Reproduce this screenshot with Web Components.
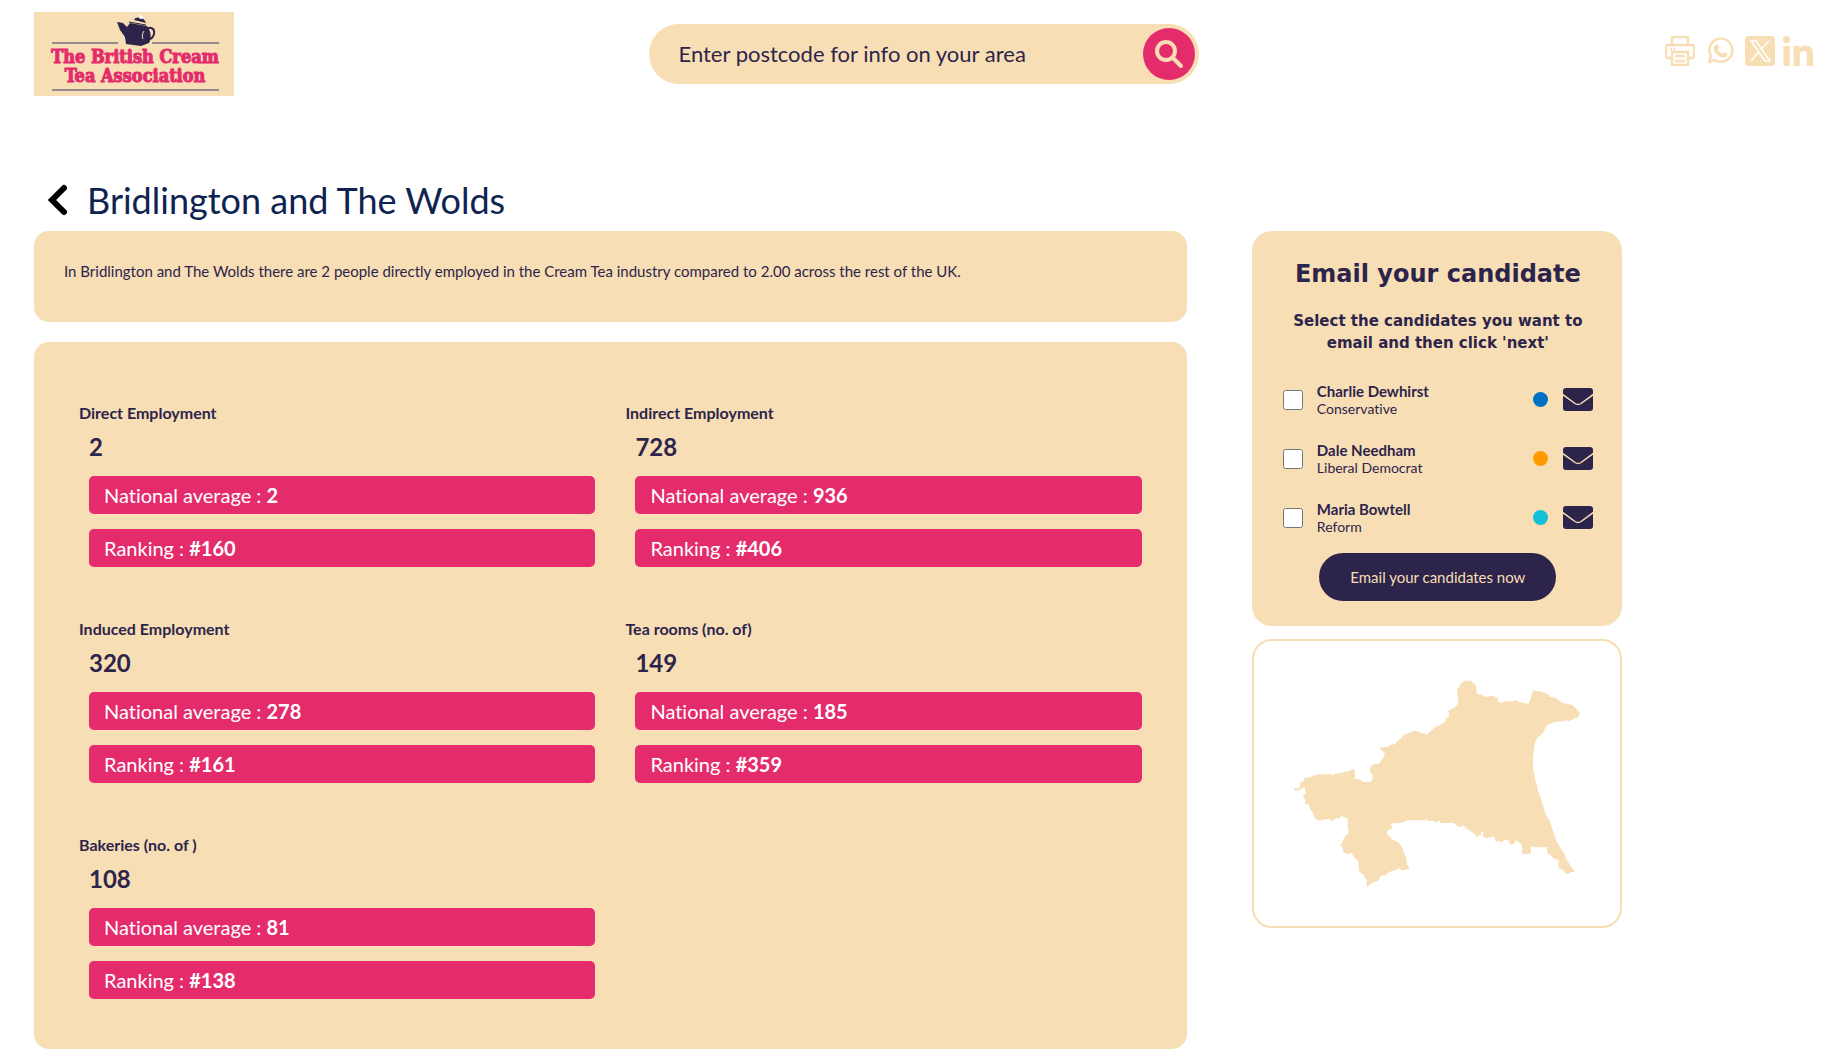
<!DOCTYPE html>
<html lang="en">
<head>
<meta charset="utf-8">
<meta name="viewport" content="width=device-width, initial-scale=1">
<title>Bridlington and The Wolds</title>
<style>
    :root {
        --cream: #f7deb5;
        --pink: #e42c6d;
        --navy: #2d244b;
    }
    body {
        margin: 0;
        background: #fff;
        color: var(--navy);
        font-family: Lato, "Liberation Sans", sans-serif;
        font-size: 16px;
        font-variant-ligatures: none;
    }
    .columns {
        display: grid;
        grid-template-columns: minmax(0, 1fr) 370px;
        column-gap: 65px;
        align-items: start;
        margin: 9px 12% 13px 34px;
    }
    .main {
        display: grid;
        gap: 20px;
    }
    .side {
        display: grid;
        gap: 13px;
    }
</style>
</head>
<body>
<site-header></site-header>
<page-title>Bridlington and The Wolds</page-title>
<div class="columns">
    <main class="main">
        <summary-panel>In Bridlington and The Wolds there are 2 people directly employed in the Cream Tea industry compared to 2.00 across the rest of the UK.</summary-panel>
        <stats-panel>
            <stat-item label="Direct Employment" value="2" average="2" ranking="#160"></stat-item>
            <stat-item label="Indirect Employment" value="728" average="936" ranking="#406"></stat-item>
            <stat-item label="Induced Employment" value="320" average="278" ranking="#161"></stat-item>
            <stat-item label="Tea rooms (no. of)" value="149" average="185" ranking="#359"></stat-item>
            <stat-item label="Bakeries (no. of )" value="108" average="81" ranking="#138"></stat-item>
        </stats-panel>
    </main>
    <aside class="side">
        <email-panel>
            <candidate-row name="Charlie Dewhirst" party="Conservative" color="#0070c5"></candidate-row>
            <candidate-row name="Dale Needham" party="Liberal Democrat" color="#ff9a00"></candidate-row>
            <candidate-row name="Maria Bowtell" party="Reform" color="#12bfdb"></candidate-row>
        </email-panel>
        <area-map></area-map>
    </aside>
</div>

<script>
class SiteLogo extends HTMLElement {
    constructor() {
        super();
        this.attachShadow({ mode: 'open' });
    }

    connectedCallback() {
        this.shadowRoot.innerHTML = `
            <style>
                :host { display: block; background: var(--cream); }
                svg { display: block; }
                text {
                    font-family: "DejaVu Serif Condensed", "DejaVu Serif", serif;
                    font-weight: bold;
                    font-size: 18px;
                    fill: var(--pink);
                    stroke: var(--pink);
                    text-anchor: middle;
                }
            </style>
            <svg width="200" height="84" viewBox="0 0 200 84" role="img" aria-label="The British Cream Tea Association">
                <path d="M18 31h66M118 31h67M18 78h167" stroke="#77707f" stroke-width="1.500"/>
                <path d="M83 10l6 1 4 4 3-4 17 3c4 5 5 12 2 17l-8 3-15-2-1-7-5-7z" fill="#2d244b"/>
                <path d="M95 10l17 3" stroke="#2d244b" stroke-width="1"/>
                <path d="M100 8c2-4 10-3 12 3z" fill="#2d244b"/>
                <circle cx="107" cy="5" r="2" fill="#fff"/>
                <path d="M112 18c4-4 9-2 8 4-1 5-5 6-9 6" fill="none" stroke="#2d244b" stroke-width="2"/>
                <path d="M110 19c-2 3-2 5-1 8" fill="none" stroke="#f7deb5" stroke-width="1"/>
                <text x="101" y="51">The British Cream</text>
                <text x="101" y="70">Tea Association</text>
            </svg>
        `;
    }
}

class PostcodeSearch extends HTMLElement {
    constructor() {
        super();
        this.attachShadow({ mode: 'open' });
    }

    connectedCallback() {
        this.shadowRoot.innerHTML = `
            <style>
                :host { display: block; }
                form {
                    display: flex;
                    align-items: center;
                    height: 60px;
                    box-sizing: border-box;
                    padding: 0 4px 0 30px;
                    border-radius: 30px;
                    background: var(--cream);
                }
                input {
                    flex: 1;
                    min-width: 0;
                    border: 0;
                    padding: 0;
                    outline: 0;
                    background: none;
                    color: var(--navy);
                    font: 22px/30px Lato, sans-serif;
                }
                input::placeholder { color: var(--navy); opacity: 1; }
                button {
                    width: 52px;
                    height: 52px;
                    border: 0;
                    padding: 0;
                    border-radius: 50%;
                    background: var(--pink);
                    display: grid;
                    place-items: center;
                }
            </style>
            <form>
                <input type="text" placeholder="Enter postcode for info on your area" aria-label="Postcode">
                <button type="button" aria-label="Search">
                    <svg width="30" height="30" viewBox="0 0 30 30" fill="none" stroke="#f7deb5" stroke-width="4" stroke-linecap="round">
                        <circle cx="12" cy="12" r="9"/>
                        <path d="M19 19l8 8"/>
                    </svg>
                </button>
            </form>
        `;
    }
}

class ShareLinks extends HTMLElement {
    constructor() {
        super();
        this.attachShadow({ mode: 'open' });
    }

    connectedCallback() {
        this.shadowRoot.innerHTML = `
            <style>
                :host { display: flex; gap: 8px; align-items: center; color: var(--cream); }
                a { display: block; color: inherit; }
                svg { display: block; }
            </style>
            <a href="#" aria-label="Print">
                <svg width="30" height="30" viewBox="0 0 30 30" fill="none" stroke="currentColor" stroke-width="2.400">
                    <path d="M7 8V1h16v7M7 22H3a2 2 0 0 1-2-2v-9a2 2 0 0 1 2-2h24a2 2 0 0 1 2 2v9a2 2 0 0 1-2 2h-4"/>
                    <path d="M7 16h16v13H7zM10 20h10M10 25h10M5 13h2M8 13h2"/>
                </svg>
            </a>
            <a href="#" aria-label="WhatsApp">
                <svg width="34" height="30" viewBox="-4 -2 34 30">
                    <path d="M2 24l2-6a11.500 11.500 0 1 1 4 4z" fill="none" stroke="currentColor" stroke-width="2.400" stroke-linejoin="round"/>
                    <path d="M8.500 7c1-1 2-.8 2.400 0l1.100 2.500c.2.600-1 1.500-1.300 2 1.300 2.300 2.700 3.500 5 4.400.5-.5 1.200-1.900 1.900-1.600l2.500 1.200c.7.400.2 2-.3 2.700-1.500 1.600-3.700 1.500-5.800.7-3.300-1.300-5.300-3.300-6.800-6-1-2-.7-4.400 1.300-5.900z" fill="currentColor"/>
                </svg>
            </a>
            <a href="#" aria-label="X">
                <svg width="30" height="30" viewBox="0 0 30 30">
                    <rect width="30" height="30" rx="4" fill="currentColor"/>
                    <path d="M6 5h5l14 20h-5zM24 5L16 13.500M6 25l8-9" fill="none" stroke="#fff" stroke-width="1.600"/>
                </svg>
            </a>
            <a href="#" aria-label="LinkedIn">
                <svg width="30" height="30" viewBox="0 0 30 30" fill="currentColor">
                    <circle cx="3.600" cy="3.600" r="3.600"/>
                    <path d="M.5 10h6.200v20H.5zM10.600 10h5.900v2.700c1-1.900 3.200-3.200 6-3.200 6 0 7.500 3.800 7.500 9V30h-6.200v-9.700c0-2.500-.1-5.200-3.200-5.200s-3.800 2.500-3.800 5V30h-6.200z"/>
                </svg>
            </a>
        `;
    }
}

class SiteHeader extends HTMLElement {
    constructor() {
        super();
        this.attachShadow({ mode: 'open' });
    }

    connectedCallback() {
        this.shadowRoot.innerHTML = `
            <style>
                :host { display: block; }
                header {
                    display: grid;
                    grid-template-columns: 1fr 550px 1fr;
                    align-items: start;
                    padding: 12px 30px 0 34px;
                }
                site-logo { justify-self: start; }
                postcode-search { margin-top: 12px; }
                share-links { justify-self: end; margin-top: 24px; }
            </style>
            <header>
                <site-logo></site-logo>
                <postcode-search></postcode-search>
                <share-links></share-links>
            </header>
        `;
    }
}

class PageTitle extends HTMLElement {
    constructor() {
        super();
        this.attachShadow({ mode: 'open' });
    }

    connectedCallback() {
        this.shadowRoot.innerHTML = `
            <style>
                :host { display: flex; align-items: center; gap: 20px; padding: 82px 34px 0 47px; }
                a { display: block; color: #000; }
                svg { display: block; }
                h1 { margin: 0; font-size: 36px; line-height: 44px; font-weight: 400; color: #0f2350; }
            </style>
            <a href="#" aria-label="Back">
                <svg width="20" height="32" viewBox="0 0 20 32" fill="none" stroke="currentColor" stroke-width="6" stroke-linecap="round">
                    <path d="M17 4L5 16l12 12"/>
                </svg>
            </a>
            <h1><slot></slot></h1>
        `;
    }
}

class SummaryPanel extends HTMLElement {
    constructor() {
        super();
        this.attachShadow({ mode: 'open' });
    }

    connectedCallback() {
        this.shadowRoot.innerHTML = `
            <style>
                :host { display: block; padding: 30px 30px 40px; border-radius: 15px; background: var(--cream); }
                p { margin: 0; font-size: 15px; line-height: 21px; }
            </style>
            <p><slot></slot></p>
        `;
    }
}

class StatsPanel extends HTMLElement {
    constructor() {
        super();
        this.attachShadow({ mode: 'open' });
    }

    connectedCallback() {
        this.shadowRoot.innerHTML = `
            <style>
                :host {
                    display: grid;
                    grid-template-columns: 1fr 1fr;
                    gap: 51px 30px;
                    padding: 60px 45px 50px;
                    border-radius: 15px;
                    background: var(--cream);
                }
            </style>
            <slot></slot>
        `;
    }
}

class StatItem extends HTMLElement {
    constructor() {
        super();
        this.attachShadow({ mode: 'open' });
    }

    connectedCallback() {
        this.shadowRoot.innerHTML = `
            <style>
                :host { display: block; }
                h3 { margin: 0; font-size: 16px; line-height: 22px; font-weight: bold; }
                .body { display: grid; gap: 15px; margin-left: 10px; }
                .value { font-size: 24px; line-height: 36px; font-weight: bold; margin-top: 5px; margin-bottom: -4px; }
                .bar {
                    padding: 0 15px;
                    border-radius: 5px;
                    background: var(--pink);
                    color: #fff;
                    font-size: 20px;
                    line-height: 38px;
                }
            </style>
            <h3>${this.getAttribute('label')}</h3>
            <div class="body">
                <div class="value">${this.getAttribute('value')}</div>
                <div class="bar">National average : <b>${this.getAttribute('average')}</b></div>
                <div class="bar">Ranking : <b>${this.getAttribute('ranking')}</b></div>
            </div>
        `;
    }
}

class EmailPanel extends HTMLElement {
    constructor() {
        super();
        this.attachShadow({ mode: 'open' });
    }

    connectedCallback() {
        this.shadowRoot.innerHTML = `
            <style>
                :host { display: block; padding: 25px 29px 25px 31px; border-radius: 20px; background: var(--cream); text-align: center; }
                h2, h4 { margin: 0; font-family: "DejaVu Sans", sans-serif; font-weight: bold; }
                h2 { font-size: 24px; line-height: 36px; }
                h4 { font-size: 15px; line-height: 22px; padding: 18px 0 26px; }
                .list { display: grid; gap: 20px; text-align: left; }
                button {
                    height: 48px;
                    margin-top: 16px;
                    padding: 0 31px;
                    border: 0;
                    border-radius: 24px;
                    background: var(--navy);
                    color: var(--cream);
                    font: 15px/20px Lato, sans-serif;
                }
            </style>
            <h2>Email your candidate</h2>
            <h4>Select the candidates you want to email and then click 'next'</h4>
            <div class="list"><slot></slot></div>
            <button type="button">Email your candidates now</button>
        `;
    }
}

class CandidateRow extends HTMLElement {
    constructor() {
        super();
        this.attachShadow({ mode: 'open' });
    }

    connectedCallback() {
        const name = this.getAttribute('name');
        this.shadowRoot.innerHTML = `
            <style>
                :host { display: flex; align-items: center; height: 39px; }
                input { width: 20px; height: 20px; margin: 0 14px 0 0; }
                label { flex: 1; line-height: 18px; }
                b, span { display: block; }
                b { font-size: 15px; }
                span { font-size: 14px; }
                i { width: 15px; height: 15px; border-radius: 50%; background: ${this.getAttribute('color')}; }
                a { display: block; margin-left: 15px; color: var(--navy); }
                svg { display: block; }
            </style>
            <input type="checkbox" id="pick">
            <label for="pick"><b>${name}</b><span>${this.getAttribute('party')}</span></label>
            <i></i>
            <a href="#" aria-label="Email ${name}">
                <svg width="30" height="23" viewBox="0 0 30 23">
                    <rect width="30" height="23" rx="3" fill="currentColor"/>
                    <path d="M-1 6L12 15.500q3 2 6 0L31 6" fill="none" stroke="#f7deb5" stroke-width="1.500"/>
                </svg>
            </a>
        `;
    }
}

class AreaMap extends HTMLElement {
    constructor() {
        super();
        this.attachShadow({ mode: 'open' });
    }

    connectedCallback() {
        this.shadowRoot.innerHTML = `
            <style>
                :host { display: block; padding: 39px 40px; border: 2px solid var(--cream); border-radius: 20px; }
                svg { display: block; width: 100%; color: var(--cream); }
            </style>
            <svg viewBox="162 155 858 620" fill="currentColor" role="img" aria-label="Map of Bridlington and The Wolds">
                <path d="M162 480L175 480 180 475 180 462 190 459 195 448 212 447 218 443 234 438 268 438 272 435 276 441 284 436 306 434 313 430 327 429 339 421 344 427 345 452 358 453 365 457 368 461 390 461 396 457 399 440 390 432 390 419 400 408 418 406 424 395 430 389 435 375 418 361 425 357 441 356 451 349 465 348 474 336 483 330 489 321 517 310 522 306 536 310 547 316 555 313 557 321 566 315 579 303 586 295 597 292 617 279 617 273 628 262 624 247 640 240 655 226 651 181 658 175 661 166 669 161 676 156 681 160 692 156 697 163 704 165 709 175 710 196 725 199 740 207 752 202 764 202 765 209 773 208 775 220 783 224 796 219 820 219 826 215 835 220 852 223 859 227 868 222 880 184 888 188 902 189 925 198 928 206 943 207 955 215 967 224 998 230 1009 241 1020 254 1015 265 1003 271 984 279 976 276 971 279 945 280 923 289 915 300 908 316 892 328 884 345 883 360 879 385 879 426 883 433 884 450 891 472 894 487 902 509 916 555 930 580 948 635 961 660 973 675 976 687 990 710 1005 730 991 732 987 736 977 736 970 725 956 720 956 695 940 690 937 685 923 674 920 656 882 657 876 653 873 656 873 674 869 677 847 677 846 651 843 646 828 635 822 647 813 649 808 645 805 635 791 636 786 644 780 639 766 639 764 626 751 626 741 630 728 624 729 609 722 614 724 620 716 621 710 626 703 616 683 602 671 601 682 597 668 593 657 597 641 584 601 584 600 577 592 579 590 585 581 577 568 578 565 580 561 573 553 576 503 576 483 584 454 585 453 590 458 600 441 608 441 617 459 635 476 642 487 659 494 681 499 687 500 708 509 720 504 723 485 726 475 718 471 724 447 731 439 740 422 743 415 757 398 763 379 777 381 755 375 750 371 739 358 730 354 698 343 687 334 673 324 677 310 671 307 656 299 652 305 646 312 628 327 611 323 600 323 571 304 563 299 571 289 569 276 579 268 572 262 573 259 571 248 575 236 577 224 568 218 552 211 545 206 526 199 529 195 523 197 514 189 507 191 501 197 497 194 475 183 482 178 486 165 488z"/>
            </svg>
        `;
    }
}

customElements.define('site-logo', SiteLogo);
customElements.define('postcode-search', PostcodeSearch);
customElements.define('share-links', ShareLinks);
customElements.define('site-header', SiteHeader);
customElements.define('page-title', PageTitle);
customElements.define('summary-panel', SummaryPanel);
customElements.define('stats-panel', StatsPanel);
customElements.define('stat-item', StatItem);
customElements.define('email-panel', EmailPanel);
customElements.define('candidate-row', CandidateRow);
customElements.define('area-map', AreaMap);
</script>
</body>
</html>
